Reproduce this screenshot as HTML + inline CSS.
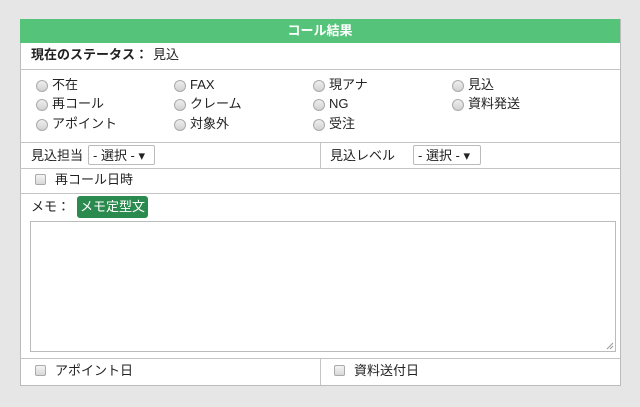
<!DOCTYPE html><html><head><meta charset="utf-8"><style>
body{margin:0;width:640px;height:407px;background:#e6e6e6;font-family:"Liberation Sans","Noto Sans CJK JP",sans-serif;font-size:13px;color:#222;position:relative;overflow:hidden}
.a{position:absolute}
.p{left:20px;top:19px;width:599px;height:366px;background:#fff;border:1px solid #bbb;border-top:none}
.h{left:20px;top:19px;width:600px;height:24px;background:#55c47a;color:#fff;text-align:center;line-height:24px;font-weight:bold;font-size:13px}
.l{background:#c4c4c4;height:1px;left:20px;width:600px}
.v{background:#c4c4c4;width:1px}
.r{width:10px;height:10px;border-radius:50%;border:1px solid #aaa;background:linear-gradient(#eee,#d2d2d2)}
.t{line-height:16px;white-space:nowrap}
.c{width:9px;height:9px;border:1px solid #aaa;border-radius:2px;background:linear-gradient(#f4f4f4,#d8d8d8)}
.s{height:20px;border:1px solid #bbb;border-radius:2px;background:#fff;line-height:20px;font-size:13px;padding-left:4px;box-sizing:border-box}
</style></head><body>
<div class="a p"></div>
<div class="a h">コール結果</div>
<div class="a t" style="left:31px;top:47px;font-weight:bold">現在のステータス：</div>
<div class="a t" style="left:153px;top:47px">見込</div>
<div class="a l" style="top:69px"></div>
<div class="a r" style="left:36px;top:80px"></div><div class="a t" style="left:52px;top:77px">不在</div>
<div class="a r" style="left:36px;top:99px"></div><div class="a t" style="left:52px;top:96px">再コール</div>
<div class="a r" style="left:36px;top:119px"></div><div class="a t" style="left:52px;top:116px">アポイント</div>
<div class="a r" style="left:174px;top:80px"></div><div class="a t" style="left:190px;top:77px">FAX</div>
<div class="a r" style="left:174px;top:99px"></div><div class="a t" style="left:190px;top:96px">クレーム</div>
<div class="a r" style="left:174px;top:119px"></div><div class="a t" style="left:190px;top:116px">対象外</div>
<div class="a r" style="left:313px;top:80px"></div><div class="a t" style="left:329px;top:77px">現アナ</div>
<div class="a r" style="left:313px;top:99px"></div><div class="a t" style="left:329px;top:96px">NG</div>
<div class="a r" style="left:313px;top:119px"></div><div class="a t" style="left:329px;top:116px">受注</div>
<div class="a r" style="left:452px;top:80px"></div><div class="a t" style="left:468px;top:77px">見込</div>
<div class="a r" style="left:452px;top:99px"></div><div class="a t" style="left:468px;top:96px">資料発送</div>
<div class="a l" style="top:142px"></div>
<div class="a t" style="left:31px;top:148px">見込担当</div>
<div class="a s" style="left:88px;top:145px;width:67px">- 選択 - ▾</div>
<div class="a v" style="left:320px;top:142px;height:26px"></div>
<div class="a t" style="left:330px;top:148px">見込レベル</div>
<div class="a s" style="left:413px;top:145px;width:68px">- 選択 - ▾</div>
<div class="a l" style="top:168px"></div>
<div class="a c" style="left:35px;top:174px"></div><div class="a t" style="left:55px;top:172px">再コール日時</div>
<div class="a l" style="top:193px"></div>
<div class="a t" style="left:31px;top:199px">メモ：</div>
<div class="a" style="left:77px;top:196px;width:71px;height:22px;background:#2b8a4e;border-radius:3px;color:#fff;line-height:22px;text-align:center">メモ定型文</div>
<div class="a" style="left:30px;top:221px;width:584px;height:129px;border:1px solid #bbb"></div>
<svg class="a" style="left:606px;top:342px" width="8" height="8"><path d="M7 1L1 7M7 4L4 7" stroke="#999" stroke-width="1"/></svg>
<div class="a l" style="top:358px"></div>
<div class="a v" style="left:320px;top:358px;height:27px"></div>
<div class="a c" style="left:35px;top:365px"></div><div class="a t" style="left:55px;top:363px">アポイント日</div>
<div class="a c" style="left:334px;top:365px"></div><div class="a t" style="left:354px;top:363px">資料送付日</div>
</body></html>
